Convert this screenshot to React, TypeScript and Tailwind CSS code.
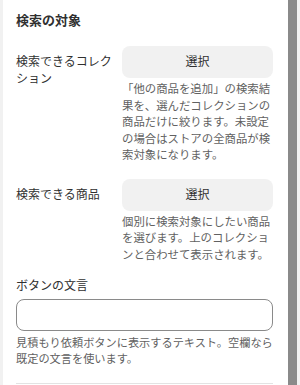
import React from "react";

const font = { fontFamily: 'Inter, "Noto Sans CJK JP", sans-serif' };

export default function App() {
  return (
    <div className="flex h-[385px] w-[300px] overflow-hidden bg-white" style={font}>
      <div className="w-[3px] shrink-0 bg-[#f1f1f1]" />
      <div className="flex w-[285px] flex-col pl-[13px] pr-[15px] pt-[10px]">
        <h2 className="text-[13px] font-semibold leading-[20px] text-[#303030]">検索の対象</h2>

        <div className="mt-[16px] grid grid-cols-[100px_1fr] gap-x-[6px]">
          <div className="pt-[8px] text-[12px] leading-[16.5px] text-[#303030]">検索できるコレクション</div>
          <div className="flex flex-col">
            <button className="h-[32px] w-full rounded-[8px] bg-[#f1f1f1] text-[12px] text-[#303030]">選択</button>
            <p className="mt-[3px] text-[11.4px] leading-[16.5px] text-[#616161]">
              「他の商品を追加」の検索結果を、選んだコレクションの商品だけに絞ります。未設定の場合はストアの全商品が検索対象になります。
            </p>
          </div>
        </div>

        <div className="mt-[15px] grid grid-cols-[100px_1fr] gap-x-[6px]">
          <div className="pt-[8px] text-[12px] leading-[16.5px] text-[#303030]">検索できる商品</div>
          <div className="flex flex-col">
            <button className="h-[32px] w-full rounded-[8px] bg-[#f1f1f1] text-[12px] text-[#303030]">選択</button>
            <p className="mt-[3px] text-[11.4px] leading-[16.5px] text-[#616161]">
              個別に検索対象にしたい商品を選びます。上のコレクションと合わせて表示されます。
            </p>
          </div>
        </div>

        <div className="mt-[15px] flex flex-col">
          <label className="text-[12px] leading-[16.5px] text-[#303030]">ボタンの文言</label>
          <input className="mt-[4px] h-[32px] w-full rounded-[8px] border border-[#8a8a8a] bg-white px-2 text-[12px] outline-none" />
          <p className="mt-[4px] text-[11.2px] leading-[16.5px] text-[#616161]">
            見積もり依頼ボタンに表示するテキスト。空欄なら既定の文言を使います。
          </p>
        </div>

        <div className="mt-[15px] h-px w-full shrink-0 bg-[#e3e3e3]" />
      </div>
      <div className="w-[9px] shrink-0 bg-[#8a8a8a]" />
      <div className="w-[3px] shrink-0 bg-[#f1f1f1]" />
    </div>
  );
}
